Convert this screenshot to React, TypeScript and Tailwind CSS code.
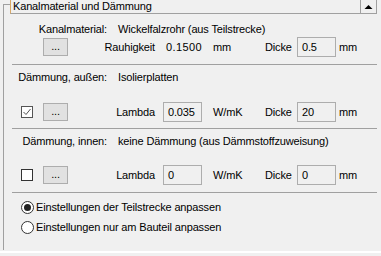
import React from "react";

const font = { fontFamily: '"Liberation Sans", Arial, sans-serif', letterSpacing: "-0.15px" };

function Btn() {
  return (
    <div className="w-[25px] h-[18px] border border-[#adadad] bg-[#e1e1e1] flex items-center justify-center text-[11px] leading-none pb-[2px] shrink-0">
      ...
    </div>
  );
}

function Field({ v }: { v: string }) {
  return (
    <div className="w-[39px] h-[20px] border border-[#adadad] bg-[#f0f0f0] flex items-center pl-[4px] text-[11px] shrink-0">
      {v}
    </div>
  );
}

function ParamRow({
  lead,
  label,
  value,
  unit,
  plain,
  dicke,
}: {
  lead: React.ReactNode;
  label: string;
  value: string;
  unit: string;
  dicke: string;
  plain?: boolean;
}) {
  return (
    <div className="flex items-center h-[20px] shrink-0">
      <div className="w-[39px] flex items-center pl-[17px] shrink-0">{lead}</div>
      <Btn />
      <div className="w-[88px] text-right pr-[1px] shrink-0">{label}</div>
      <div className="w-[7px] shrink-0" />
      {plain ? (
        <div className="w-[39px] pl-[3px] tracking-[0.4px] shrink-0">{value}</div>
      ) : (
        <Field v={value} />
      )}
      <div className="w-[11px] shrink-0" />
      <div className="w-[52px] shrink-0">{unit}</div>
      <div className="w-[32px] shrink-0">Dicke</div>
      <Field v={dicke} />
      <div className="ml-[3px]">mm</div>
    </div>
  );
}

function CheckBox({ checked }: { checked?: boolean }) {
  return (
    <div
      className={
        "w-[12px] h-[12px] border flex items-center justify-center bg-white " +
        (checked ? "border-[#555555]" : "border-[#333333]")
      }
    >
      {checked && (
        <svg width="10" height="10" viewBox="0 0 10 10">
          <path d="M1.5 5 L4 7.5 L8.5 2" fill="none" stroke="#555" strokeWidth="1" />
        </svg>
      )}
    </div>
  );
}

function Radio({ on }: { on?: boolean }) {
  return (
    <div className="w-[13px] h-[13px] rounded-full border border-[#333333] bg-white flex items-center justify-center shrink-0">
      {on && <div className="w-[7px] h-[7px] rounded-full bg-[#222222]" />}
    </div>
  );
}

function Sep() {
  return <div className="ml-[8px] w-[365px] h-[1px] bg-[#a0a0a0] shrink-0" />;
}

function Gap({ h }: { h: string }) {
  return <div className={h + " shrink-0"} />;
}

export default function App() {
  return (
    <div
      className="w-[381px] h-[256px] bg-[#f0f0f0] text-[11px] text-black flex flex-col overflow-hidden"
      style={font}
    >
      <div className="flex h-[14px] shrink-0">
        <div className="w-[3px]" />
        <div className="w-[7px] mt-[4px] border-t border-l border-[#a0a0a0]" />
        <div className="flex-1 flex items-center border-b border-[#a0a0a0] border-l border-l-[#d8a868] pl-[2px] leading-none">
          Kanalmaterial und Dämmung
        </div>
        <div className="w-[17px] border-x border-b border-[#a0a0a0] flex items-center justify-center">
          <svg width="9" height="6" viewBox="0 0 9 6">
            <path d="M0.5 5 L4.5 1 L8.5 5 Z" fill="#000" />
          </svg>
        </div>
        <div className="w-[4px]" />
      </div>
      <div className="ml-[3px] border-l border-[#a0a0a0] h-[236px] shrink-0 flex flex-col">
        <Gap h="h-[9px]" />
        <div className="flex items-center h-[12px] shrink-0">
          <div className="w-[103px] text-right">Kanalmaterial:</div>
          <div className="ml-[11px]">Wickelfalzrohr (aus Teilstrecke)</div>
        </div>
        <Gap h="h-[2px]" />
        <ParamRow lead={null} label="Rauhigkeit" value="0.1500" plain unit="mm" dicke="0.5" />
        <Gap h="h-[7px]" />
        <Sep />
        <Gap h="h-[6px]" />
        <div className="flex items-center h-[12px] shrink-0">
          <div className="w-[103px] text-right">Dämmung, außen:</div>
          <div className="ml-[11px]">Isolierplatten</div>
        </div>
        <Gap h="h-[19px]" />
        <ParamRow lead={<CheckBox checked />} label="Lambda" value="0.035" unit="W/mK" dicke="20" />
        <Gap h="h-[6px]" />
        <Sep />
        <Gap h="h-[6px]" />
        <div className="flex items-center h-[12px] shrink-0">
          <div className="w-[103px] text-right">Dämmung, innen:</div>
          <div className="ml-[11px]">keine Dämmung (aus Dämmstoffzuweisung)</div>
        </div>
        <Gap h="h-[18px]" />
        <ParamRow lead={<CheckBox />} label="Lambda" value="0" unit="W/mK" dicke="0" />
        <Gap h="h-[7px]" />
        <Sep />
        <Gap h="h-[7px]" />
        <div className="flex items-center h-[14px] pl-[17px] gap-[2px] shrink-0">
          <Radio on />
          <span>Einstellungen der Teilstrecke anpassen</span>
        </div>
        <Gap h="h-[6px]" />
        <div className="flex items-center h-[14px] pl-[17px] gap-[2px] shrink-0">
          <Radio />
          <span>Einstellungen nur am Bauteil anpassen</span>
        </div>
      </div>
      <div className="h-[1px] shrink-0" />
      <div className="h-[2px] bg-white shrink-0" />
    </div>
  );
}
